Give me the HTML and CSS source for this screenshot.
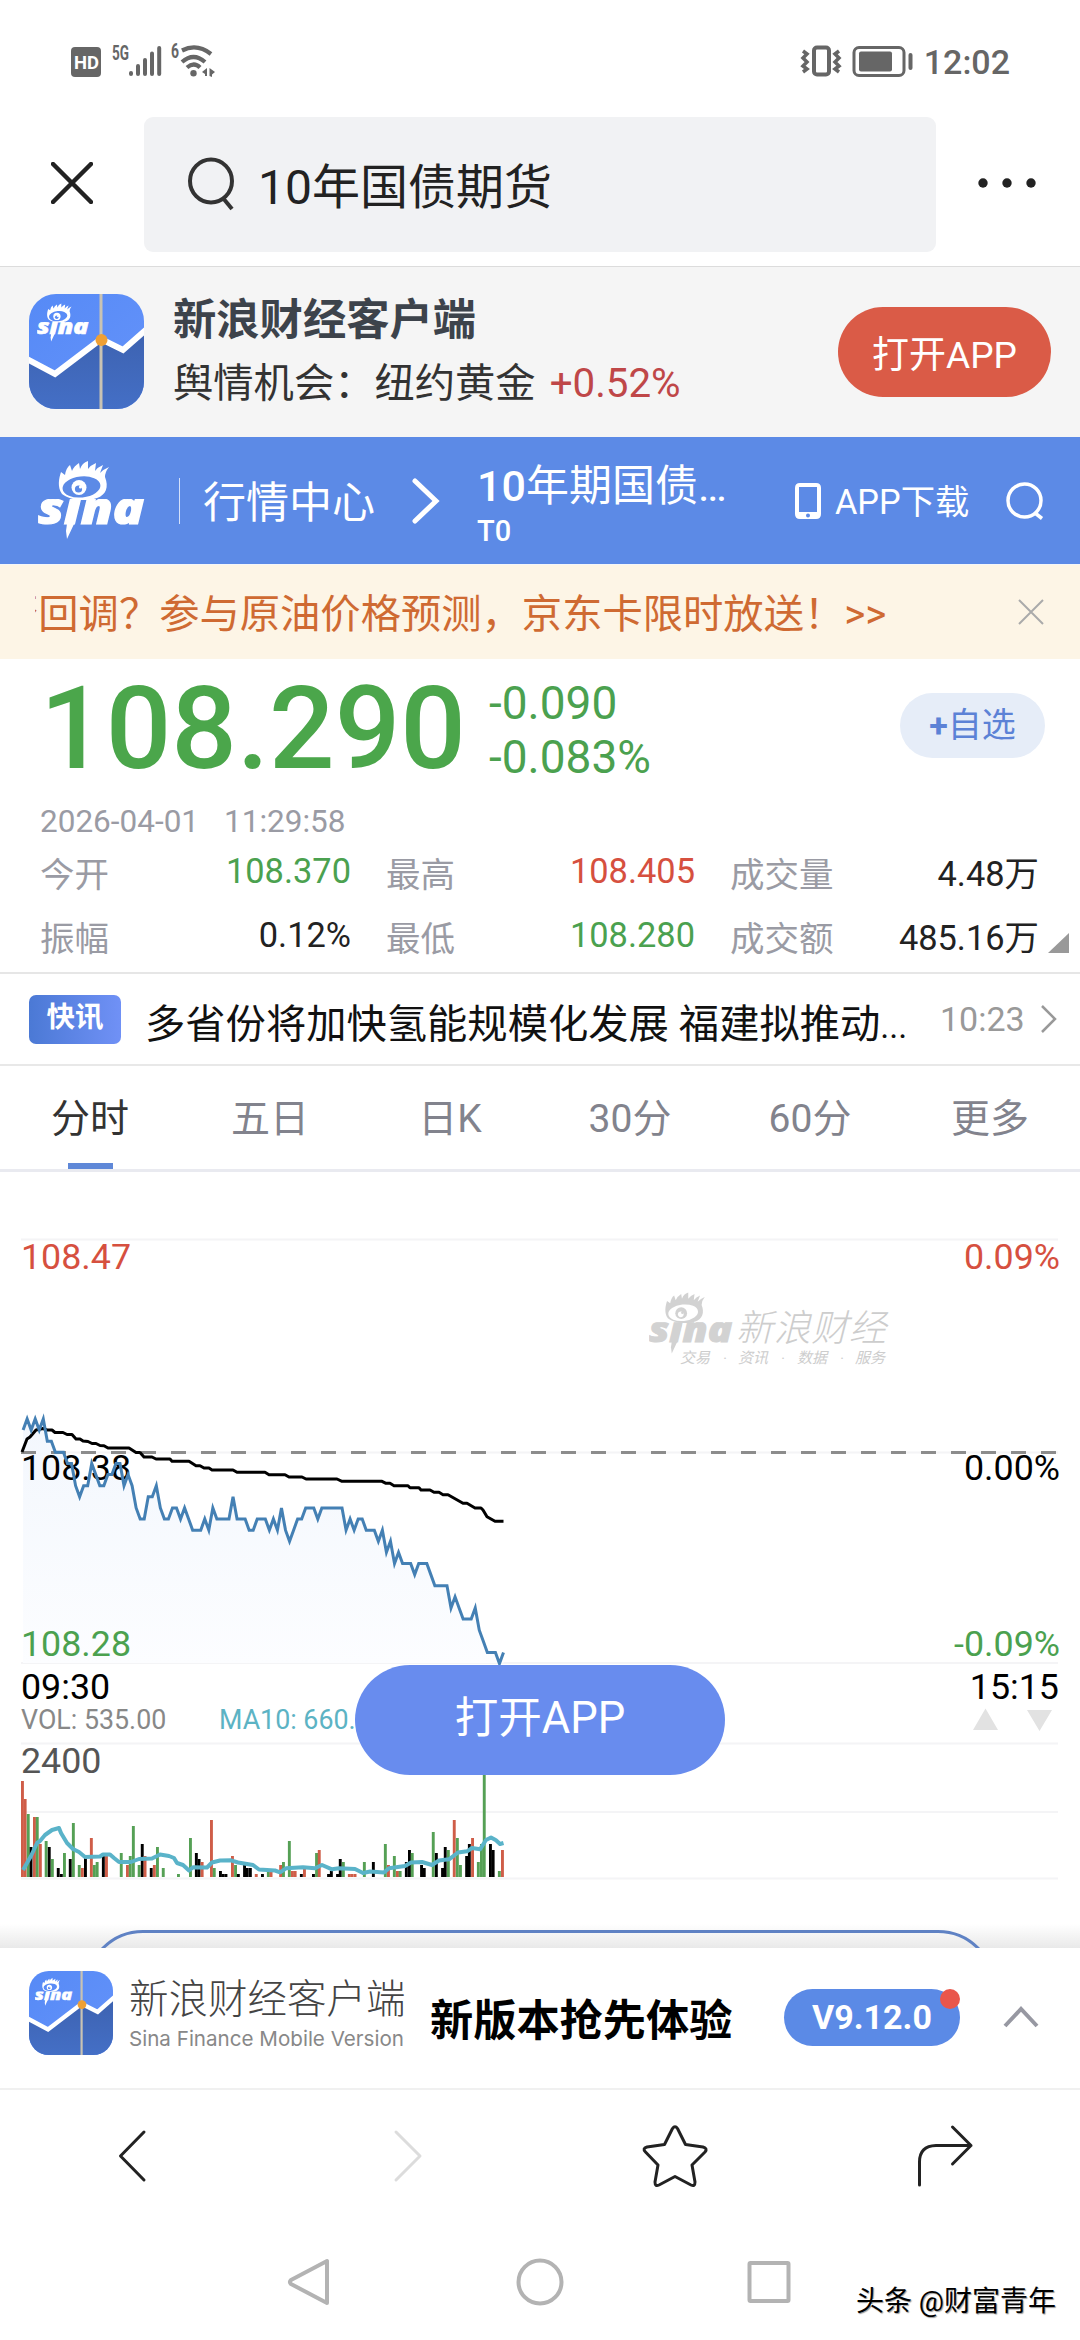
FILE: index.html
```html
<!DOCTYPE html>
<html lang="zh-CN">
<head>
  <meta charset="UTF-8">
  <meta name="viewport" content="width=device-width, initial-scale=1.0">
  <title>10年国债期货</title>
  <link rel="stylesheet" href="styles.css">
</head>
<body>

  <!-- Shared logos -->
  <svg class="sprite" width="0" height="0">
    <defs>
      <linearGradient id="iconTop" x1="0" y1="0" x2="1" y2="1">
        <stop offset="0" stop-color="#568af6"/>
        <stop offset="1" stop-color="#6593fa"/>
      </linearGradient>
      <linearGradient id="iconBottom" x1="0" y1="0" x2="0" y2="1">
        <stop offset="0" stop-color="#3d62b0"/>
        <stop offset="1" stop-color="#446fc6"/>
      </linearGradient>
      <linearGradient id="areaFill" x1="0" y1="0" x2="0" y2="1">
        <stop offset="0" stop-color="#f3f7fd"/>
        <stop offset="1" stop-color="#fcfdff"/>
      </linearGradient>
      <mask id="eyeMask" maskUnits="userSpaceOnUse" x="0" y="-2" width="107" height="82">
        <rect x="0" y="-2" width="107" height="82" fill="#fff"/>
        <ellipse cx="43.500" cy="26" rx="19" ry="10.500" transform="rotate(-6 43 26)" fill="#000"/>
        <circle cx="41" cy="26.500" r="7.500" fill="#fff"/>
        <circle cx="40.500" cy="28" r="3.600" fill="#000"/>
        <circle cx="42.500" cy="26" r="1.600" fill="#fff"/>
      </mask>
      <clipPath id="wordClip"><rect x="-3" y="38" width="114" height="40"/></clipPath>
    </defs>
    <symbol id="sina" viewBox="0 0 107 78">
      <g fill="currentColor">
        <path mask="url(#eyeMask)" d="M24 33 C19 26 21 17 23 11 L27 14 Q28 7 32 4 L34 10 Q36 5 41 2 L42 8 Q44 2 50 0 L50 8 Q53 4 58 2 L57 10 Q60 6 65 4 L62 12 Q66 8 71 6 Q67 11 67 16 C71 26 68 34 59 37 C47 41 31 39 24 33 Z"/>
        <path d="M32 41 L42 41 L36 63 L29 78 L28 70 Z"/>
        <g clip-path="url(#wordClip)">
          <text x="0" y="63" class="logo-text" textLength="106" lengthAdjust="spacingAndGlyphs">sina</text>
        </g>
      </g>
    </symbol>
    <symbol id="appicon" viewBox="0 0 115 115">
      <clipPath id="iconClip"><rect width="115" height="115" rx="27"/></clipPath>
      <g clip-path="url(#iconClip)">
        <rect width="115" height="115" fill="url(#iconTop)"/>
        <path d="M0 66 L26 81 L72 45 L94 56 L115 37 V115 H0 Z" fill="url(#iconBottom)"/>
        <path d="M-4 64 L26 80 L72 45 L94 56 L119 34" fill="none" stroke="#fff" stroke-width="6"/>
        <rect x="70.500" width="3" height="115" fill="#c9c3b3"/>
        <circle cx="72.500" cy="46" r="6" fill="#efa035"/>
        <use href="#sina" x="8" y="9" width="52" height="39" color="#fff"/>
      </g>
    </symbol>
  </svg>

  <!-- Status bar -->
  <div class="status">
    <svg class="status-left" width="150" height="36" viewBox="68 43 150 36" fill="#666">
      <rect x="71" y="47" width="30" height="30" rx="4"/>
      <text x="74" y="68.500" class="hd" textLength="25" lengthAdjust="spacingAndGlyphs">HD</text>
      <text x="112" y="60" class="net" textLength="17" lengthAdjust="spacingAndGlyphs">5G</text>
      <g stroke="#666" stroke-width="4" stroke-linecap="round">
        <path d="M131 73V74M138 66V74M145 60V74M152 53.500V74M159.200 48V74"/>
      </g>
      <text x="171" y="58" class="net" textLength="8" lengthAdjust="spacingAndGlyphs">6</text>
      <g fill="none" stroke="#666" stroke-width="4.200">
        <path d="M182 50.500Q197 43 211 54M182 62Q193.500 52 205 62M187 67.500Q194 61.500 200 67.500"/>
      </g>
      <circle cx="193.500" cy="73.200" r="3.200"/>
      <path d="M207 68V76H205V74L202 72ZM209.500 68L215 72L212 74.500V77L209.500 76Z"/>
    </svg>
    <div class="status-right">
      <svg width="114" height="36" viewBox="802 43 114 36" fill="none" stroke="#666" stroke-width="4">
        <path d="M805 51l4 3-4 4 4 4-4 4 4 3-4 3M841 51l-4 3 4 4-4 4 4 4-4 3 4 3" stroke-width="3.500"/>
        <rect x="816" y="47.500" width="15" height="27" rx="3"/>
        <rect x="856" y="47.500" width="50" height="28" rx="5" stroke-width="3"/>
        <rect x="861" y="51.500" width="33" height="20" rx="2" fill="#666" stroke="none"/>
        <path d="M912.500 55V68" stroke-linecap="round"/>
      </svg>
      <span class="clock">12:02</span>
    </div>
  </div>

  <!-- Search -->
  <div class="search">
    <svg class="close-icon" width="42" height="42" viewBox="0 0 42 42"><path d="M2 2L40 40M40 2L2 40"/></svg>
    <div class="search-box">
      <svg width="50" height="56" viewBox="0 0 50 56"><ellipse cx="24" cy="24" rx="21" ry="21.500"/><path d="M36 41L45 52"/></svg>
      <span>10年国债期货</span>
    </div>
    <svg class="more-icon" width="60" height="12" viewBox="0 0 60 12">
      <circle cx="6" cy="6" r="4.700"/><circle cx="30" cy="6" r="4.700"/><circle cx="54" cy="6" r="4.700"/>
    </svg>
  </div>

  <!-- App banner -->
  <div class="banner">
    <svg width="115" height="115"><use href="#appicon"/></svg>
    <div class="banner-text">
      <div class="banner-title">新浪财经客户端</div>
      <div class="banner-sub">舆情机会：纽约黄金 <span>+0.52%</span></div>
    </div>
    <div class="open-btn">打开APP</div>
  </div>

  <!-- Header -->
  <header class="topbar">
    <svg class="logo" width="107" height="78"><use href="#sina"/></svg>
    <i class="bar"></i>
    <span class="center-link">行情中心</span>
    <svg class="chev" width="28" height="46" viewBox="0 0 28 46"><path d="M3 3L24 23L3 43"/></svg>
    <div class="name">
      <div class="name-main"><b>10</b>年期国债…</div>
      <div class="name-code">T0</div>
    </div>
    <svg class="phone" width="26" height="36" viewBox="0 0 26 36">
      <path fill-rule="evenodd" d="M5 0H21Q26 0 26 5V31Q26 36 21 36H5Q0 36 0 31V5Q0 0 5 0ZM4 4V29H22V4ZM13 30.500A2 2 0 1 0 13 34.500A2 2 0 1 0 13 30.500Z"/>
    </svg>
    <span class="download">APP下载</span>
    <svg class="find" width="38" height="38" viewBox="0 0 38 38"><circle cx="18.500" cy="18.500" r="16.500"/><path d="M29 31L36 36.500"/></svg>
  </header>

  <!-- Notice -->
  <div class="notice">
    <div class="notice-text">否回调？参与原油价格预测，京东卡限时放送！&gt;&gt;</div>
    <svg width="26" height="26" viewBox="0 0 26 26"><path d="M1 1L25 25M25 1L1 25"/></svg>
  </div>

  <!-- Quote -->
  <section class="quote">
    <div class="quote-head">
      <div class="price">108.290</div>
      <div class="change"><div>-0.090</div><div>-0.083%</div></div>
      <div class="fav"><b>+</b>自选</div>
    </div>
    <div class="date"><span>2026-04-01</span><span>11:29:58</span></div>
    <div class="stats">
      <div><label>今开</label><span class="down">108.370</span></div>
      <div><label>最高</label><span class="up">108.405</span></div>
      <div><label>成交量</label><span class="cn">4.48万</span></div>
      <div><label>振幅</label><span>0.12%</span></div>
      <div><label>最低</label><span class="down">108.280</span></div>
      <div><label>成交额</label><span class="cn">485.16万</span></div>
    </div>
    <i class="corner"></i>
  </section>

  <!-- News -->
  <div class="news">
    <span class="tag">快讯</span>
    <span class="headline">多省份将加快氢能规模化发展 福建拟推动<small>...</small></span>
    <span class="time">10:23</span>
    <svg width="16" height="28" viewBox="0 0 16 28"><path d="M1 1L14 14L1 27"/></svg>
  </div>

  <!-- Tabs -->
  <nav class="tabs">
    <div class="tab active"><span>分时</span></div>
    <div class="tab"><span>五日</span></div>
    <div class="tab"><span>日K</span></div>
    <div class="tab"><span>30分</span></div>
    <div class="tab"><span>60分</span></div>
    <div class="tab"><span>更多</span></div>
  </nav>

  <!-- Chart -->
  <section class="chart">
    <svg width="1080" height="776" viewBox="0 1172 1080 776">
      <g class="grid">
        <path d="M21 1239.500H1058M21 1452.500H1058M21 1663H1058M21 1743.500H1058M21 1812H1058M21 1878.500H1058"/>
      </g>
      <path id="area" fill="url(#areaFill)"/>
      <path class="dash" d="M21 1452.500H1058"/>
      <text x="21" y="1269" class="lab up">108.47</text>
      <text x="21" y="1480" class="lab">108.38</text>
      <text x="21" y="1656" class="lab down">108.28</text>
      <text x="1060" y="1269" class="lab end up">0.09%</text>
      <text x="1060" y="1480" class="lab end">0.00%</text>
      <text x="1060" y="1656" class="lab end down">-0.09%</text>
      <g class="mark">
        <use href="#sina" x="649" y="1292" width="84" height="62"/>
        <text x="736" y="1341" class="mark-name" textLength="150">新浪财经</text>
        <text x="680" y="1363" class="mark-sub">交易</text>
        <text x="723" y="1363" class="mark-sub">·</text>
        <text x="738" y="1363" class="mark-sub">资讯</text>
        <text x="781" y="1363" class="mark-sub">·</text>
        <text x="797" y="1363" class="mark-sub">数据</text>
        <text x="840" y="1363" class="mark-sub">·</text>
        <text x="855" y="1363" class="mark-sub">服务</text>
      </g>
      <path id="avg" class="avg"/>
      <path id="line" class="line"/>
      <text x="21" y="1699" class="lab">09:30</text>
      <text x="1059" y="1699" class="lab end">15:15</text>
      <text x="21" y="1729" class="vol">VOL: 535.00</text>
      <text x="219" y="1729" class="vol ma-text">MA10: 660.60</text>
      <path d="M973 1730L985.500 1708.500L998 1730ZM1027 1710H1052L1039.500 1731Z" fill="#e2e2e2"/>
      <text x="21" y="1773" class="lab" fill="#555">2400</text>
      <g id="bars"></g>
      <path id="ma" class="ma"/>
    </svg>
    <div class="float-btn">打开APP</div>
    <div class="more-box"><div class="more-pill"></div></div>
  </section>

  <!-- App footer -->
  <footer class="app-footer">
    <svg class="footer-icon" width="84" height="84"><use href="#appicon"/></svg>
    <div class="brand">
      <div class="brand-cn">新浪财经客户端</div>
      <div class="brand-en">Sina Finance Mobile Version</div>
    </div>
    <div class="slogan">新版本抢先体验</div>
    <div class="version">V9.12.0</div>
    <svg class="caret" width="36" height="22" viewBox="0 0 36 22"><path d="M2 20L18 3L34 20"/></svg>
  </footer>

  <!-- Browser bar -->
  <div class="browser">
    <svg width="1080" height="130" viewBox="0 2090 1080 130">
      <path d="M144 2132L120.500 2156L144 2180"/>
      <path class="off" d="M396 2132L420 2156L396 2180"/>
      <path d="M672.500 2128.500Q675 2125 677.500 2128.500L685.500 2144.500L703 2147Q708 2148.500 705 2152L692 2165L695 2182Q695 2187 691 2185L675 2176.500L659 2185Q655 2187 655 2182L658 2165L645.500 2152Q642 2148.500 647 2147L664.500 2144.500Z"/>
      <path d="M919.500 2185V2162Q919.500 2146 936 2145.500H971M952.500 2127L971 2145.500L952.500 2164"/>
    </svg>
  </div>

  <!-- System navigation -->
  <div class="system">
    <svg width="1080" height="120" viewBox="0 2220 1080 120">
      <path d="M327 2261V2303L291 2284Q289 2282 291 2280Z"/>
      <circle cx="540" cy="2282" r="21.500"/>
      <rect x="749.500" y="2263" width="39" height="38" rx="1"/>
    </svg>
    <div class="credit">头条 @财富青年</div>
  </div>

  <script src="script.js"></script>
</body>
</html>
```
FILE: styles.css
```css
* {
  box-sizing: border-box;
}

body {
  margin: 0;
  width: 1080px;
  height: 2340px;
  overflow: hidden;
  background-color: #fff;
  color: #222;
  font-family: Roboto, "Noto Sans CJK SC", sans-serif;
}

svg {
  display: block;
  flex-shrink: 0;
}

.sprite {
  position: absolute;
  visibility: hidden;
}

.sprite mask,
.sprite clipPath {
  visibility: visible;
}

.logo-text {
  font: italic 800 45px "Open Sans", sans-serif;
  stroke: currentColor;
  stroke-width: 1.2;
}

.up {
  color: #d6503f;
  fill: #d6503f;
}

.down {
  color: #4ba14f;
  fill: #4ba14f;
}

/* Status bar */
.status {
  height: 117px;
  padding: 43px 70px 0 68px;
  display: flex;
  justify-content: space-between;
}

.status-left {
  overflow: visible;
}

.hd {
  font: bold 19px Roboto, sans-serif;
  fill: #fff;
}

.net {
  font: bold 20px Roboto, sans-serif;
}

.status-right {
  display: flex;
  gap: 10px;
  height: 36px;
}

.clock {
  font-size: 34px;
  line-height: 38px;
  font-weight: 500;
  color: #666;
}

/* Search */
.search {
  height: 150px;
  padding-left: 51px;
  border-bottom: 1px solid #dcdcdc;
  display: flex;
  align-items: flex-start;
}

.close-icon {
  margin-top: 45px;
  fill: none;
  stroke: #222;
  stroke-width: 4.5;
  stroke-linecap: round;
}

.search-box {
  width: 792px;
  height: 135px;
  margin-left: 51px;
  padding-left: 43px;
  border-radius: 9px;
  background-color: #f1f2f4;
  display: flex;
  align-items: center;
  font-size: 48px;
  line-height: 60px;
}

.search-box svg {
  fill: none;
  stroke: #333;
  stroke-width: 4;
}

.search-box span {
  margin: 7px 0 0 21px;
}

.more-icon {
  margin: 60px 0 0 41px;
  fill: #222;
}

/* App banner */
.banner {
  height: 170px;
  padding: 0 29px 2px;
  background-color: #f5f5f5;
  display: flex;
  align-items: center;
}

.banner-text {
  margin: 2px 0 0 29px;
  flex: 1;
}

.banner-title {
  font-size: 43.3px;
  line-height: 60px;
  font-weight: bold;
  color: #3d434b;
}

.banner-sub {
  margin-top: 3px;
  font-size: 40.3px;
  line-height: 60px;
  color: #333;
  white-space: nowrap;
}

.banner-sub span {
  margin-left: 4px;
  font-size: 40.3px;
  color: #bf4748;
}

.open-btn {
  width: 213px;
  height: 90px;
  padding-top: 5px;
  margin-top: 1px;
  border-radius: 45px;
  background-color: #da5b47;
  color: #fff;
  font-size: 37px;
  line-height: 88px;
  text-align: center;
}

/* Header */
.topbar {
  height: 127px;
  padding-left: 38px;
  background-color: #5c8ae6;
  color: #fff;
  display: flex;
  align-items: center;
}

.logo {
  margin-top: -2px;
}

.bar {
  width: 1px;
  height: 46px;
  margin: 0 23px 0 34px;
  background-color: #d3e0fa;
}

.center-link {
  font-size: 43px;
  line-height: 60px;
  margin-top: 4px;
}

.chev {
  margin-left: 37px;
  fill: none;
  stroke: #fff;
  stroke-width: 5;
  stroke-linecap: round;
}

.name {
  width: 300px;
  margin: 0 0 0 37px;
  padding-top: 6px;
}

.name-main {
  font-size: 43px;
  line-height: 54px;
}

.name-main b {
  font-weight: 500;
}

.name-code {
  font-size: 29px;
  line-height: 36px;
  font-weight: 500;
}

.phone {
  margin-left: 18px;
  fill: #fff;
}

.download {
  margin: 3px 0 0 14px;
  font-size: 34.3px;
  line-height: 50px;
}

.find {
  margin-left: 37px;
  fill: none;
  stroke: #fff;
  stroke-width: 3.5;
}

/* Notice */
.notice {
  height: 95px;
  padding: 0 36px 0 35px;
  border-top: 1px solid #f5f6f8;
  background-color: #fdf5e6;
  display: flex;
  align-items: center;
  justify-content: space-between;
}

/* scrolling line, clipped at its left edge */
.notice-text {
  font-size: 40.3px;
  line-height: 60px;
  color: #cf6a32;
  margin-top: 5px;
  text-indent: -37px;
  overflow: hidden;
  white-space: nowrap;
}

.notice svg {
  fill: none;
  stroke: #aaa;
  stroke-width: 2;
}

/* Quote */
.quote {
  position: relative;
  height: 315px;
  padding: 21px 42px 0 40px;
  border-bottom: 2px solid #e6e6e6;
}

.quote-head {
  display: flex;
  height: 112px;
}

.price {
  width: 449px;
  font-size: 115.5px;
  line-height: 97px;
  font-weight: 500;
  color: #4ba64b;
}

.change {
  margin-top: -4px;
  font-size: 46px;
  line-height: 54px;
  color: #4ba14f;
  flex: 1;
}

.fav {
  width: 145px;
  height: 65px;
  margin: 13px -7px 0 0;
  border-radius: 33px;
  background-color: #e6edf8;
  color: #5c82d6;
  font-size: 34px;
  line-height: 64px;
  text-align: center;
}

.date {
  display: flex;
  gap: 25px;
  margin-top: 10px;
  font-size: 31.5px;
  line-height: 40px;
  color: #9a9ba4;
}

.stats {
  display: grid;
  grid-template-columns: 311px 309px 309px;
  column-gap: 35px;
  padding-top: 1px;
}

.stats div {
  height: 64px;
  display: flex;
  justify-content: space-between;
}

.stats label {
  font-size: 34.5px;
  line-height: 64px;
  color: #9a9ba4;
}

.stats span {
  font-size: 34.4px;
  line-height: 56px;
}

.stats .cn {
  line-height: 63px;
}

.corner {
  position: absolute;
  left: 1048px;
  top: 274px;
  border-left: 21px solid transparent;
  border-bottom: 20px solid #999;
}

/* News */
.news {
  height: 92px;
  padding-left: 29px;
  border-bottom: 2px solid #e8e8e8;
  display: flex;
  align-items: center;
}

.tag {
  width: 92px;
  height: 49px;
  border-radius: 7px;
  background: linear-gradient(90deg, #4b79d5, #7091f6);
  color: #fff;
  font-size: 28.5px;
  line-height: 46px;
  font-weight: bold;
  text-align: center;
}

.headline {
  width: 795px;
  margin: 12px 0 0 24px;
  font-size: 40.3px;
  line-height: 60px;
  color: #111;
  white-space: nowrap;
}

.headline small {
  font-size: 34px;
}

.time {
  font-size: 34px;
  line-height: 40px;
  color: #999;
}

.news svg {
  margin-left: 16px;
  fill: none;
  stroke: #999;
  stroke-width: 2.5;
}

/* Tabs */
.tabs {
  height: 106px;
  border-bottom: 3px solid #e9eaf0;
  display: grid;
  grid-template-columns: repeat(6, 1fr);
}

.tab {
  display: flex;
  flex-direction: column;
  align-items: center;
  font-size: 39px;
  line-height: 87px;
  color: #82838d;
}

.tab span {
  padding-top: 10px;
}

.tab.active {
  color: #333;
}

.tab.active::after {
  content: "";
  width: 45px;
  height: 6px;
  background-color: #5f88d8;
}

/* Chart */
.chart {
  position: relative;
  height: 776px;
}

.grid path {
  stroke: #f4f4f6;
  stroke-width: 2;
}

.dash {
  stroke: #8c8c8c;
  stroke-width: 3;
  stroke-dasharray: 15 15;
}

.lab {
  font-size: 35.8px;
}

.lab:not(.up):not(.down):not([fill]) {
  fill: #000;
}

.end {
  text-anchor: end;
}

.vol {
  font-size: 26.8px;
  fill: #888;
}

.ma-text {
  fill: #5cb3c4;
}

.avg,
.line,
.ma {
  fill: none;
  stroke: #000;
  stroke-width: 3;
  stroke-linejoin: round;
}

.line {
  stroke: #4480b4;
  stroke-linejoin: miter;
}

.ma {
  stroke: #5ab3c9;
  stroke-width: 4;
}

.mark {
  color: #d2d2d2;
  fill: #cdcdcd;
}

.mark-name {
  font-size: 37px;
  font-style: italic;
  font-weight: 300;
}

.mark-sub {
  font-size: 15px;
  font-style: italic;
}

.float-btn {
  position: absolute;
  left: 355px;
  top: 493px;
  width: 370px;
  height: 110px;
  border-radius: 55px;
  background-color: #688cee;
  color: #fff;
  font-size: 43.6px;
  line-height: 107px;
  text-align: center;
  z-index: 2;
}

.more-box {
  position: absolute;
  left: 0;
  bottom: 0;
  width: 1080px;
  height: 24px;
  overflow: hidden;
  background: linear-gradient(#fff, #e9e9e9);
}

.more-pill {
  width: 911px;
  height: 116px;
  margin: 6px auto 0;
  border: 3px solid #5f82c4;
  border-radius: 58px;
}

/* App footer */
.app-footer {
  height: 142px;
  padding: 0 41px 2px 29px;
  border-bottom: 2px solid #f0f0f0;
  background-color: #fff;
  display: flex;
  align-items: center;
}

.footer-icon {
  margin-top: -8px;
}

.brand {
  width: 301px;
  margin: -4px 0 0 16px;
  white-space: nowrap;
}

.brand-cn {
  font-size: 39.5px;
  line-height: 44px;
  font-weight: 300;
  color: #444;
}

.brand-en {
  margin-top: 3px;
  font: 20.6px/28px Inter, sans-serif;
  color: #888;
}

.slogan {
  width: 354px;
  font-size: 43.2px;
  line-height: 60px;
  margin-top: 9px;
  font-weight: bold;
  color: #000;
}

.version {
  position: relative;
  width: 176px;
  height: 57px;
  border-radius: 29px;
  background-color: #5b8ae6;
  color: #fff;
  font-size: 34px;
  line-height: 56px;
  font-weight: bold;
  text-align: center;
}

.version::after {
  content: "";
  position: absolute;
  right: 0;
  top: 0;
  width: 20px;
  height: 20px;
  border-radius: 50%;
  background-color: #e9564b;
}

.caret {
  margin-left: 43px;
  fill: none;
  stroke: #9798a2;
  stroke-width: 4;
}

/* Browser bar */
.browser {
  height: 130px;
}

.browser path {
  fill: none;
  stroke: #222;
  stroke-width: 3;
  stroke-linejoin: round;
  stroke-linecap: round;
}

.browser .off {
  stroke: #dcdcdc;
}

/* System navigation */
.system {
  position: relative;
  height: 120px;
  fill: none;
  stroke: #b3b3b3;
  stroke-width: 4;
  stroke-linejoin: round;
}

.credit {
  position: absolute;
  right: 24px;
  top: 62px;
  font-size: 28px;
  line-height: 40px;
  color: #000;
  text-shadow: -1px -1px 0 #fff, 1px 1px 1px #999;
}
```
FILE: script.js
```js
// minute prices, in ticks below the previous close
const prices = [
  -2, -3, -2, -3, -2, -3, -1, -1, 0, 0, 0, 1, 1, 3, 4, 3, 3, 1, 2, 3, 3, 2, 2, 1, 1, 3, 2, 3, 5, 6,
  6, 4, 4, 3, 5, 6, 6, 5, 5, 6, 5, 6, 7, 7, 7, 6, 7, 5, 6, 6, 6, 6, 4, 6, 6, 6, 7, 7, 6, 6,
  6, 7, 6, 7, 5, 7, 8, 7, 6, 6, 5, 5, 5, 6, 5, 5, 5, 5, 5, 5, 7, 6, 7, 6, 6, 7, 7, 7, 8, 7,
  9, 8, 10, 9, 10, 10, 10, 11, 10, 10, 10, 11, 12, 12, 12, 12, 14, 13, 14, 15, 15, 15, 14, 16, 17, 18, 18, 18, 19, 18
];

// average price: x, y
const average = [
  22, 1452, 27, 1439, 30, 1437, 36, 1430, 43, 1428.5, 47, 1430, 52, 1430, 55, 1432.5, 63, 1432.5, 67, 1434.5,
  72, 1434.5, 76, 1439, 80, 1439, 83, 1441, 88, 1441.5, 92, 1443.5, 96, 1443.5, 100, 1445.5, 104, 1445.7, 108, 1448,
  129, 1448, 136, 1452.5, 140, 1452.5, 144, 1457, 152, 1457, 156, 1459, 170, 1459, 172, 1461.3, 189, 1461.3,
  196, 1465.7, 200, 1465.7, 204, 1468, 209, 1468, 212, 1470, 233, 1470, 237, 1472.3, 265, 1472.3, 269, 1474.7,
  285, 1474.7, 289, 1477, 302, 1477, 306, 1479, 337, 1479, 342, 1481.3, 382, 1481.3, 386, 1483.3, 390, 1483.3,
  394, 1485.7, 408, 1485.7, 410, 1487.7, 419, 1487.7, 421, 1490, 430, 1490, 434, 1492.3, 439, 1492.3, 443, 1494.7,
  448, 1494.7, 463, 1503.3, 467, 1503.3, 475, 1508, 481, 1508, 483, 1510, 487, 1516.7, 495, 1521.3, 503.5, 1521.3
];

// volume bars: color, x, height
const volumes = `r22.400,96 r25.100,78 g28.200,63 k31,30 r34.400,60 g37.200,60 r40.300,33 g46.100,36 k49.200,30 g52.300,18
k58.200,9 k61.300,3 g64.400,24 k70.200,18 g73.300,54 g79.200,12 r82.300,9 k85.400,21 r91.300,39 g94.300,12 g97.100,15
k103.300,21 r106.400,21 g121.200,24 r127.400,12 g130.200,21 g133.300,51 g139.100,12 k142.200,33 r145,21 k151.200,9
r154.300,12 g157.400,30 g163.200,9 g178.400,3 g190.400,39 k196.300,24 k199,18 r202.100,15 r211.400,57 g214.200,9
k220.400,6 k223.100,3 k225.900,3 r232.400,21 g235.500,12 k238.300,3 k244.500,15 k247.200,9 k250.300,9 r256.200,3
k262.400,3 g268.300,6 r271,6 r280.600,12 g283.400,15 g289.300,36 r292.400,6 r295.100,6 k301.300,3 r304.400,9
k313.400,3 g316.500,24 r319.200,27 k328.500,3 k331.300,6 k337.500,3 k340.200,18 g343.300,15 r349.300,3 r352,3 r355,3
g364.300,15 k373.300,15 g385.300,33 r388.400,12 g394.300,21 r397.400,6 g400.100,6 k406.300,15 k409.400,27 g412.200,24
k421.500,12 k424.200,9 g433.200,45 k436.300,24 k442.500,9 k445.200,30 g448.300,27 r454.200,57 g457.300,39 g460.400,12
k466.600,21 k469.300,33 r472.500,39 g478.300,15 g481.400,33 g484.200,124 k490.400,33 k493.100,27 g499.300,6 r502.400,27`;

const ma10 = [
  23, 1870, 31, 1856, 37, 1843, 40, 1841, 45, 1835, 52, 1830, 59, 1828, 61, 1833, 67, 1843, 73, 1849, 79, 1852,
  85, 1857, 100, 1856.5, 103, 1854.5, 110, 1854.5, 114, 1858, 119, 1862, 131, 1862, 139, 1859, 152, 1858.5,
  160, 1854.5, 169, 1856, 174, 1858, 177, 1863, 183, 1865, 189, 1870.5, 193, 1867.3, 207, 1867.5, 212, 1862.5,
  220, 1860.5, 231, 1860.3, 238, 1862.5, 253, 1865, 259, 1869.5, 275, 1870.5, 280, 1872.3, 286, 1868.3,
  303, 1867.3, 315, 1868.3, 322, 1865, 332, 1869.3, 339, 1868.3, 355, 1869, 363, 1873, 370, 1871.5, 384, 1872.5,
  389, 1868.3, 405, 1866, 411, 1862.5, 422, 1862, 432, 1865, 439, 1860.5, 449, 1859.3, 458, 1852.5, 467, 1851.3,
  472, 1848, 480, 1849.3, 486, 1840, 491, 1837.5, 496, 1840.3, 500, 1844, 503.5, 1843
];

const colors = { r: '#cf5d48', g: '#55a055', k: '#000' };

function toPath(points) {
  let d = 'M';
  for (let i = 0; i < points.length; i += 2) {
    d += points[i] + ' ' + points[i + 1] + ' ';
  }
  return d;
}

const pricePoints = [];
prices.forEach((p, i) => pricePoints.push(23.1 + i * 4.037, 1452.3 + p * 11.12));

const priceLine = toPath(pricePoints);
document.getElementById('line').setAttribute('d', priceLine);
document.getElementById('area').setAttribute('d', priceLine + 'V1663H23Z');
document.getElementById('avg').setAttribute('d', toPath(average));
document.getElementById('ma').setAttribute('d', toPath(ma10));

document.getElementById('bars').innerHTML = volumes.split(/\s+/).map(item => {
  const [x, h] = item.slice(1).split(',').map(Number);
  return `<rect x="${x - 1.4}" y="${1877 - h}" width="2.9" height="${h}" fill="${colors[item[0]]}"/>`;
}).join('');
```
